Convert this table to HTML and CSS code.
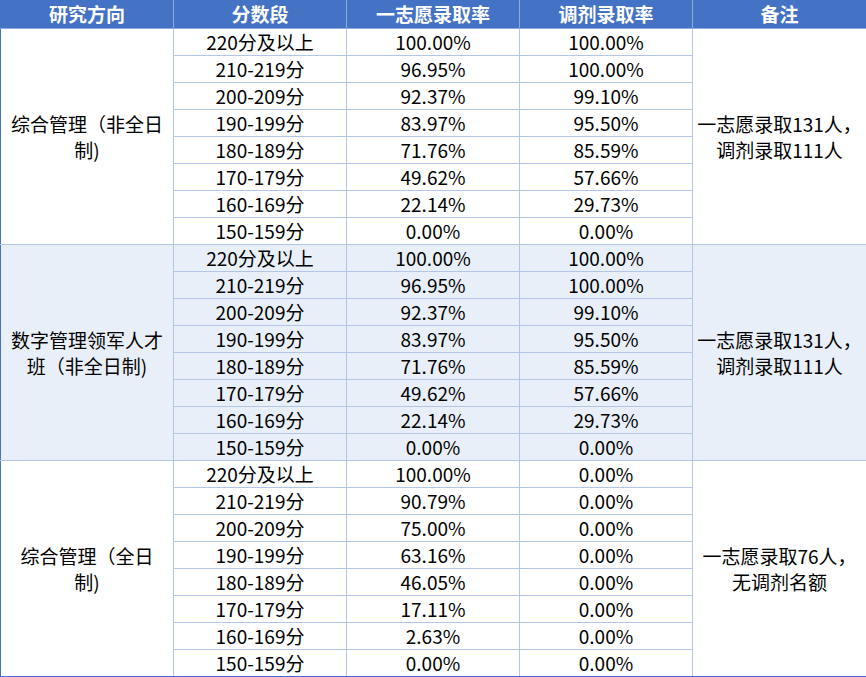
FILE: index.html
```html
<!DOCTYPE html>
<html lang="zh">
<head>
<meta charset="utf-8">
<link rel="stylesheet" href="styles.css">
</head>
<body>
<table class="tbl">
<colgroup><col class="c1"><col class="c2"><col class="c3"><col class="c4"><col class="c5"></colgroup>
<thead>
<tr><th>研究方向</th><th>分数段</th><th>一志愿录取率</th><th>调剂录取率</th><th>备注</th></tr>
</thead>
<tbody class="g">
<tr><td class="dir" rowspan="8">综合管理（非全日制)</td><td>220分及以上</td><td>100.00%</td><td>100.00%</td><td class="note" rowspan="8">一志愿录取131人，<br>调剂录取111人</td></tr>
<tr><td>210-219分</td><td>96.95%</td><td>100.00%</td></tr>
<tr><td>200-209分</td><td>92.37%</td><td>99.10%</td></tr>
<tr><td>190-199分</td><td>83.97%</td><td>95.50%</td></tr>
<tr><td>180-189分</td><td>71.76%</td><td>85.59%</td></tr>
<tr><td>170-179分</td><td>49.62%</td><td>57.66%</td></tr>
<tr><td>160-169分</td><td>22.14%</td><td>29.73%</td></tr>
<tr><td>150-159分</td><td>0.00%</td><td>0.00%</td></tr>
</tbody>
<tbody class="g alt">
<tr><td class="dir" rowspan="8">数字管理领军人才班（非全日制)</td><td>220分及以上</td><td>100.00%</td><td>100.00%</td><td class="note" rowspan="8">一志愿录取131人，<br>调剂录取111人</td></tr>
<tr><td>210-219分</td><td>96.95%</td><td>100.00%</td></tr>
<tr><td>200-209分</td><td>92.37%</td><td>99.10%</td></tr>
<tr><td>190-199分</td><td>83.97%</td><td>95.50%</td></tr>
<tr><td>180-189分</td><td>71.76%</td><td>85.59%</td></tr>
<tr><td>170-179分</td><td>49.62%</td><td>57.66%</td></tr>
<tr><td>160-169分</td><td>22.14%</td><td>29.73%</td></tr>
<tr><td>150-159分</td><td>0.00%</td><td>0.00%</td></tr>
</tbody>
<tbody class="g last">
<tr><td class="dir" rowspan="8">综合管理（全日制)</td><td>220分及以上</td><td>100.00%</td><td>0.00%</td><td class="note" rowspan="8">一志愿录取76人，<br>无调剂名额</td></tr>
<tr><td>210-219分</td><td>90.79%</td><td>0.00%</td></tr>
<tr><td>200-209分</td><td>75.00%</td><td>0.00%</td></tr>
<tr><td>190-199分</td><td>63.16%</td><td>0.00%</td></tr>
<tr><td>180-189分</td><td>46.05%</td><td>0.00%</td></tr>
<tr><td>170-179分</td><td>17.11%</td><td>0.00%</td></tr>
<tr><td>160-169分</td><td>2.63%</td><td>0.00%</td></tr>
<tr><td>150-159分</td><td>0.00%</td><td>0.00%</td></tr>
</tbody>
</table>
</body>
</html>
```
FILE: styles.css
```css
html, body {
  margin: 0;
  padding: 0;
  background: #ffffff;
}
.tbl {
  width: 866px;
  table-layout: fixed;
  border-collapse: collapse;
  font-family: "Noto Sans CJK SC", "Noto Sans", sans-serif;
  font-size: 19px;
  color: #000000;
  border-left: 1px solid #4472c4;
  border-bottom: 1px solid #4472c4;
}
.c1, .c2, .c3, .c4 { width: 173px; }
.c5 { width: 174px; }
.tbl th {
  background: #4472c4;
  color: #ffffff;
  font-weight: 700;
  height: 28px;
  padding: 0;
  line-height: 26px;
  text-align: center;
  border: 1px solid #8faadc;
  border-top: none;
}
.tbl th:first-child { border-left: 1px solid #4472c4; }
.tbl td {
  height: 26px;
  padding: 0 8px;
  line-height: 26px;
  text-align: center;
  border: 1px solid #b4c6e7;
  white-space: nowrap;
}
.tbl td.dir {
  white-space: normal;
  border-left: 1px solid #4472c4;
}
.tbl td.note {
  padding: 0 2px;
}
.alt td { background: #e9eff8; }
.last tr:last-child td, .last td.dir, .last td.note { border-bottom: 1px solid #4472c4; }
```
